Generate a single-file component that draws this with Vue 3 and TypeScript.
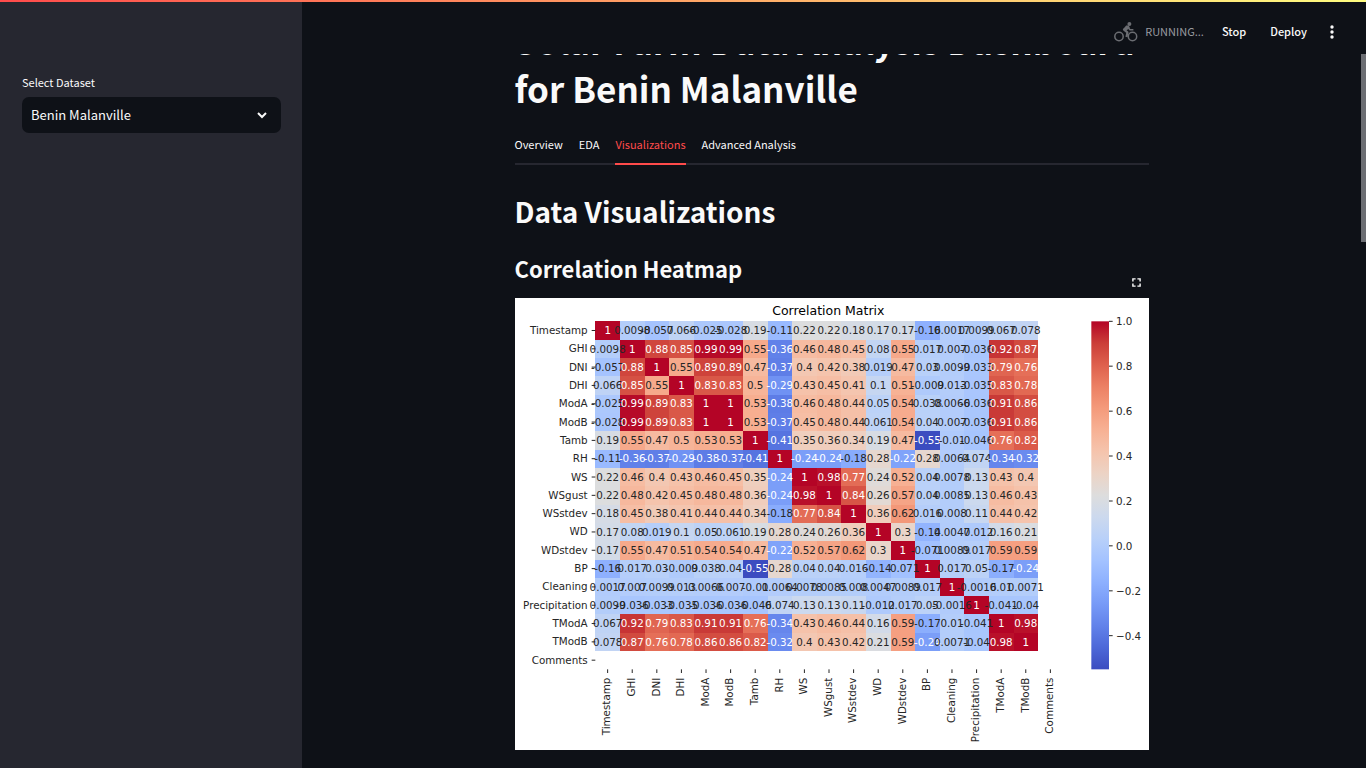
<script setup lang="ts">
import { ref } from 'vue'

const dataset = ref('Benin Malanville')
const datasets = ['Benin Malanville', 'Sierra Leone Bumbuna', 'Togo Dapaong']

const tabs = ['Overview', 'EDA', 'Visualizations', 'Advanced Analysis']
const activeTab = ref('Visualizations')

const variables = [
  'Timestamp', 'GHI', 'DNI', 'DHI', 'ModA', 'ModB', 'Tamb', 'RH', 'WS', 'WSgust',
  'WSstdev', 'WD', 'WDstdev', 'BP', 'Cleaning', 'Precipitation', 'TModA', 'TModB', 'Comments',
]

// Lower triangle of the correlation matrix; Comments holds no numeric data.
const lower: number[][] = [
  [1],
  [0.0098, 1],
  [-0.057, 0.88, 1],
  [0.066, 0.85, 0.55, 1],
  [-0.025, 0.99, 0.89, 0.83, 1],
  [-0.028, 0.99, 0.89, 0.83, 1, 1],
  [0.19, 0.55, 0.47, 0.5, 0.53, 0.53, 1],
  [-0.11, -0.36, -0.37, -0.29, -0.38, -0.37, -0.41, 1],
  [0.22, 0.46, 0.4, 0.43, 0.46, 0.45, 0.35, -0.24, 1],
  [0.22, 0.48, 0.42, 0.45, 0.48, 0.48, 0.36, -0.24, 0.98, 1],
  [0.18, 0.45, 0.38, 0.41, 0.44, 0.44, 0.34, -0.18, 0.77, 0.84, 1],
  [0.17, 0.08, 0.019, 0.1, 0.05, 0.061, 0.19, 0.28, 0.24, 0.26, 0.36, 1],
  [0.17, 0.55, 0.47, 0.51, 0.54, 0.54, 0.47, -0.22, 0.52, 0.57, 0.62, 0.3, 1],
  [-0.16, 0.017, 0.03, -0.009, 0.038, 0.04, -0.55, 0.28, 0.04, 0.04, 0.016, -0.14, -0.071, 1],
  [0.0017, 0.007, 0.0099, 0.013, 0.0066, 0.007, -0.01, 0.0064, 0.0078, 0.0085, 0.008, 0.0047, 0.0089, 0.017, 1],
  [0.0099, -0.036, -0.033, -0.035, -0.036, -0.036, -0.046, 0.074, 0.13, 0.13, 0.11, -0.012, 0.017, 0.05, -0.0016, 1],
  [0.067, 0.92, 0.79, 0.83, 0.91, 0.91, 0.76, -0.34, 0.43, 0.46, 0.44, 0.16, 0.59, -0.17, 0.01, -0.041, 1],
  [0.078, 0.87, 0.76, 0.78, 0.86, 0.86, 0.82, -0.32, 0.4, 0.43, 0.42, 0.21, 0.59, -0.24, 0.0071, -0.04, 0.98, 1],
]

// Diverging blue-to-red colour map, evenly spaced stops.
const stops: number[][] = [
  [59, 76, 192], [77, 104, 216], [98, 130, 234], [119, 154, 247], [141, 176, 254], [163, 194, 255],
  [184, 208, 249], [204, 217, 238], [221, 221, 221], [236, 211, 197], [245, 196, 173], [247, 177, 148],
  [244, 154, 123], [236, 128, 100], [222, 96, 77], [203, 62, 56], [180, 4, 38],
]
const vMin = -0.55

function rgbAt(t: number): number[] {
  const p = Math.min(Math.max(t, 0), 1) * (stops.length - 1)
  const i = Math.min(Math.floor(p), stops.length - 2)
  return stops[i].map((c, k) => Math.round(c + (stops[i + 1][k] - c) * (p - i)))
}

function luminance(rgb: number[]): number {
  const [r, g, b] = rgb.map((c) => {
    const s = c / 255
    return s <= 0.03928 ? s / 12.92 : ((s + 0.055) / 1.055) ** 2.4
  })
  return 0.2126 * r + 0.7152 * g + 0.0722 * b
}

// Chart geometry in viewBox units.
const plot = { x: 482, y: 140, w: 2804, h: 2088 }
const cw = plot.w / variables.length
const ch = plot.h / variables.length

interface Cell { x: number; y: number; w: number; h: number; fill: string; ink: string; text: string }
const cells: Cell[] = []
for (let r = 0; r < lower.length; r++) {
  for (let c = 0; c < lower.length; c++) {
    const v = c <= r ? lower[r][c] : lower[c][r]
    const rgb = rgbAt((v - vMin) / (1 - vMin))
    const x = Math.round(plot.x + c * cw)
    const y = Math.round(plot.y + r * ch)
    cells.push({
      x,
      y,
      w: Math.round(plot.x + (c + 1) * cw) - x,
      h: Math.round(plot.y + (r + 1) * ch) - y,
      fill: `rgb(${rgb.join(',')})`,
      ink: luminance(rgb) > 0.408 ? '#262626' : '#ffffff',
      text: String(v),
    })
  }
}

const gradient = stops.map((s, i) => ({
  offset: `${(i / (stops.length - 1)) * 100}%`,
  color: `rgb(${s.join(',')})`,
}))

const scaleTicks = [1, 0.8, 0.6, 0.4, 0.2, 0, -0.2, -0.4].map((v) => ({
  label: v.toFixed(1).replace('-', '−'),
  y: Math.round(plot.y + ((1 - v) / (1 - vMin)) * plot.h),
}))
</script>

<template>
  <div class="app">
    <div class="decoration"></div>
    <aside class="sidebar">
      <label for="dataset">Select Dataset</label>
      <div class="select">
        <select id="dataset" v-model="dataset">
          <option v-for="d in datasets" :key="d">{{ d }}</option>
        </select>
        <svg class="chevron" viewBox="0 0 12 12" aria-hidden="true">
          <path d="M2 4l4 4 4-4" fill="none" stroke="currentColor" stroke-width="2" />
        </svg>
      </div>
    </aside>

    <div class="page">
      <header class="toolbar">
        <svg class="bike" viewBox="0 0 24 22" aria-hidden="true">
          <g fill="none" stroke="currentColor">
            <circle cx="5" cy="15.5" r="4.2" stroke-width="1.5" />
            <circle cx="18.5" cy="15.5" r="4.2" stroke-width="1.5" />
            <path d="M13.4 6L10 8.6l3.4 2.8-.9 4.6" stroke-width="2.2" stroke-linejoin="round" />
            <path d="M13.8 6.2l2.2 2.6h3.4" stroke-width="1.6" />
          </g>
          <path d="M12.2 4.4l2.6.2 1 2.2-3.6 3-3.4-1.2z" fill="currentColor" />
          <circle cx="15.4" cy="3" r="2" fill="currentColor" />
        </svg>
        <span class="status">RUNNING...</span>
        <button type="button" class="stop">Stop</button>
        <button type="button" class="deploy">Deploy</button>
        <button type="button" class="more" aria-label="Main menu">
          <svg viewBox="0 0 6 14" aria-hidden="true">
            <circle cx="3" cy="2" r="1.7" />
            <circle cx="3" cy="7" r="1.7" />
            <circle cx="3" cy="12" r="1.7" />
          </svg>
        </button>
      </header>

      <main class="scroll">
        <div class="content">
          <h1>Solar Farm Data Analysis Dashboard for Benin Malanville</h1>
          <div class="tabs" role="tablist">
            <button
              v-for="t in tabs"
              :key="t"
              type="button"
              role="tab"
              :aria-selected="t === activeTab"
              :class="{ active: t === activeTab }"
              @click="activeTab = t"
            >{{ t }}</button>
          </div>
          <h2>Data Visualizations</h2>
          <h3>Correlation Heatmap</h3>
          <figure>
            <button type="button" class="fullscreen" aria-label="Fullscreen">
              <svg viewBox="0 0 10 10" aria-hidden="true">
                <path d="M1 4V1h3M6 1h3v3M9 6v3H6M4 9H1V6" fill="none" stroke="currentColor" stroke-width="1.6" />
              </svg>
            </button>
            <svg class="chart" viewBox="0 0 3804 2712" role="img" aria-label="Correlation Matrix">
              <defs>
                <linearGradient id="scale" x1="0" y1="1" x2="0" y2="0">
                  <stop v-for="g in gradient" :key="g.offset" :offset="g.offset" :stop-color="g.color" />
                </linearGradient>
              </defs>
              <text class="title" x="1880" y="104" text-anchor="middle">Correlation Matrix</text>
              <g shape-rendering="crispEdges">
                <rect v-for="(c, i) in cells" :key="i" :x="c.x" :y="c.y" :width="c.w" :height="c.h" :fill="c.fill" />
              </g>
              <g text-anchor="middle">
                <text v-for="(c, i) in cells" :key="i" :x="c.x + c.w / 2" :y="c.y + c.h / 2 + 22" :fill="c.ink">{{ c.text }}</text>
              </g>
              <g v-for="(v, i) in variables" :key="v" fill="#262626">
                <path class="tick" :d="`M460 ${plot.y + (i + 0.5) * ch}h22`" />
                <text x="436" :y="plot.y + (i + 0.5) * ch + 21" text-anchor="end">{{ v }}</text>
                <path class="tick" :d="`M${plot.x + (i + 0.5) * cw} 2228v22`" />
                <text
                  :transform="`translate(${plot.x + (i + 0.5) * cw + 17} 2278) rotate(-90)`"
                  text-anchor="end"
                >{{ v }}</text>
              </g>
              <rect x="3458" y="140" width="106" height="2088" fill="url(#scale)" />
              <g v-for="t in scaleTicks" :key="t.label" fill="#262626">
                <path class="tick" :d="`M3564 ${t.y}h22`" />
                <text x="3606" :y="t.y + 24">{{ t.label }}</text>
              </g>
            </svg>
          </figure>
        </div>
        <div class="thumb"></div>
      </main>
    </div>
  </div>
</template>

<style>
body {
  margin: 0;
  background: #0e1117;
}
</style>

<style scoped>
.app {
  display: flex;
  height: 100vh;
  overflow: hidden;
  position: relative;
  background: #0e1117;
  color: #fafafa;
  font-family: "Noto Sans CJK SC", "Open Sans", sans-serif;
  font-size: 13px;
}
.decoration {
  position: absolute;
  top: 0;
  left: 0;
  right: 0;
  height: 2px;
  background: linear-gradient(90deg, #ff4b4b, #fffd80);
  z-index: 2;
}
button {
  border: 0;
  padding: 0;
  background: none;
  color: inherit;
  font: inherit;
}
.sidebar {
  flex: 0 0 302px;
  box-sizing: border-box;
  padding: 73px 21px 0 22px;
  background: #262730;
}
.sidebar label {
  display: block;
  font-size: 11px;
  line-height: 18px;
  margin-bottom: 6px;
}
.select {
  position: relative;
}
.select select {
  display: block;
  width: 100%;
  height: 36px;
  padding: 0 9px 2px;
  border: 0;
  border-radius: 7px;
  appearance: none;
  background: #0e1117;
  color: inherit;
  font: inherit;
}
.chevron {
  position: absolute;
  right: 13px;
  top: 12px;
  width: 12px;
  height: 12px;
}
.page {
  flex: 1;
  min-width: 0;
  display: flex;
  flex-direction: column;
}
.toolbar {
  flex: 0 0 54px;
  box-sizing: border-box;
  display: flex;
  align-items: center;
  justify-content: flex-end;
  padding: 10px 31px 0 0;
}
.bike {
  width: 24px;
  height: 22px;
  margin-right: 7px;
  color: #6b6d72;
}
.status {
  font-size: 11px;
  color: #9a9ba0;
  padding-bottom: 2px;
  margin-right: 18px;
}
.stop,
.deploy {
  font-size: 11px;
  font-weight: 500;
  padding-bottom: 2px;
  margin-right: 24px;
}
.more svg {
  display: block;
  width: 6px;
  height: 14px;
  fill: currentColor;
}
.deploy {
  margin-right: 22px;
}
.scroll {
  flex: 1;
  min-height: 0;
  overflow: hidden;
  position: relative;
  padding-right: 5px;
}
.content {
  max-width: 634px;
  margin: 0 auto;
}
h1,
h2,
h3 {
  margin: 0;
  font-weight: 700;
}
h1 {
  margin-top: -38px;
  font-size: 35px;
  line-height: 48px;
}
.tabs {
  display: flex;
  gap: 16px;
  height: 36px;
  margin-top: 17px;
  box-shadow: inset 0 -2px #262730;
}
.tabs button {
  font-size: 11px;
  padding-bottom: 4px;
  border-bottom: 2px solid transparent;
}
.tabs .active {
  color: #ff4b4b;
  border-color: #ff4b4b;
}
h2 {
  margin-top: 27px;
  font-size: 28px;
  line-height: 38px;
}
h3 {
  margin-top: 22px;
  font-size: 22px;
  line-height: 32px;
}
figure {
  position: relative;
  margin: 14px 0 0;
}
.fullscreen {
  position: absolute;
  right: 1px;
  top: -27px;
  width: 23px;
  height: 23px;
  display: grid;
  place-items: center;
  border-radius: 7px;
}
.fullscreen svg {
  width: 9px;
  height: 9px;
}
.chart {
  display: block;
  width: 100%;
  background: #ffffff;
}
.chart text {
  font-family: "DejaVu Sans", sans-serif;
  font-size: 62px;
}
.chart .title {
  font-size: 75px;
}
.tick {
  stroke: #262626;
  stroke-width: 6;
}
.thumb {
  position: absolute;
  top: 0;
  right: 0;
  width: 5px;
  height: 188px;
  background: #6c6e73;
}
</style>
